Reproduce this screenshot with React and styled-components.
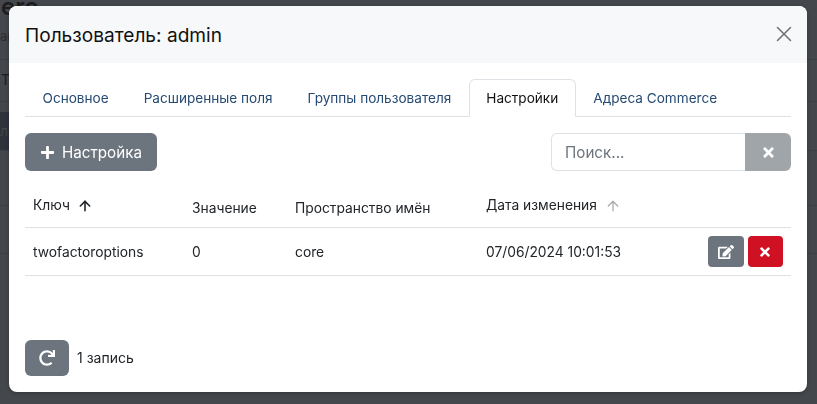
import React from "react";
import styled, { createGlobalStyle } from "styled-components";
import { FaPlus, FaTimes, FaEdit, FaRedo } from "react-icons/fa";
import { ArrowUp, X } from "lucide-react";

const GlobalStyle = createGlobalStyle`
  html, body {
    margin: 0;
    padding: 0;
    height: 100%;
    background: #44474c;
    font-family: Inter, "Liberation Sans", sans-serif;
    overflow: hidden;
  }
`;

const rows = [
  { key: "twofactoroptions", value: "0", ns: "core", date: "07/06/2024 10:01:53" },
];

const App = () => (
  <>
    <GlobalStyle />
    <Page>
      <PageTitle>
        ero <small>1.0.0</small>
      </PageTitle>
      <PageSub>ав</PageSub>
      <PageTab>Т</PageTab>
      <PageBar>ль</PageBar>
      <PageRow $height={55} />
      <PageRow $height={48} />
    </Page>
    <Modal>
      <Header>
        <Title>Пользователь: admin</Title>
        <CloseButton aria-label="Закрыть">
          <X size={26} strokeWidth={1.4} />
        </CloseButton>
      </Header>
      <Body>
        <Tabs>
          <Tab>Основное</Tab>
          <Tab>Расширенные поля</Tab>
          <Tab>Группы пользователя</Tab>
          <Tab $active>Настройки</Tab>
          <Tab>Адреса Commerce</Tab>
        </Tabs>
        <Toolbar>
          <AddButton>
            <FaPlus size={15} />
            Настройка
          </AddButton>
          <Search>
            <SearchInput placeholder="Поиск..." />
            <SearchClear>
              <FaTimes size={15} />
            </SearchClear>
          </Search>
        </Toolbar>
        <Table>
          <colgroup>
            <col width="159" />
            <col width="103" />
            <col width="191" />
            <col width="191" />
            <col />
          </colgroup>
          <thead>
            <tr>
              <Th $sorted>
                Ключ
                <SortIcon>
                  <ArrowUp size={16} strokeWidth={2.4} />
                </SortIcon>
              </Th>
              <Th>Значение</Th>
              <Th>Пространство имён</Th>
              <Th $sorted>
                Дата изменения
                <SortIcon $muted>
                  <ArrowUp size={16} strokeWidth={2} />
                </SortIcon>
              </Th>
              <Th />
            </tr>
          </thead>
          <tbody>
            {rows.map((row) => (
              <tr key={row.key}>
                <Td>{row.key}</Td>
                <Td>{row.value}</Td>
                <Td>{row.ns}</Td>
                <Td>{row.date}</Td>
                <Td>
                  <Actions>
                    <ActionButton $color="#6c757d">
                      <FaEdit size={16} />
                    </ActionButton>
                    <ActionButton $color="#d01124">
                      <FaTimes size={14} />
                    </ActionButton>
                  </Actions>
                </Td>
              </tr>
            ))}
          </tbody>
        </Table>
        <Footer>
          <RefreshButton>
            <FaRedo size={16} />
          </RefreshButton>
          <Count>1 запись</Count>
        </Footer>
      </Body>
    </Modal>
  </>
);

const Page = styled.div`
  color: #1c1d1f;
  height: 404px;
  overflow: hidden;
`;

const PageTitle = styled.div`
  font-size: 24px;
  font-weight: 600;
  line-height: 28px;
  margin: -7px 0 0 1px;
  small {
    font-size: 12px;
    font-weight: 400;
    color: #2c2e31;
  }
`;

const PageSub = styled.div`
  font-size: 13px;
  line-height: 16px;
  margin-top: 3px;
  color: #2c2e31;
  height: 31px;
  border-bottom: 1px solid #3c3f43;
`;

const PageTab = styled.div`
  font-size: 14px;
  line-height: 20px;
  padding: 10px 0 0 1px;
  height: 42px;
  box-sizing: border-box;
  color: #1c1d1f;
  border-bottom: 1px solid #3c3f43;
`;

const PageBar = styled.div`
  height: 38px;
  margin-top: 10px;
  background: linear-gradient(90deg, #2e323a 0 9px, transparent 9px);
  line-height: 38px;
  font-size: 14px;
  color: #44474c;
  border-bottom: 1px solid #3c3f43;
`;

const PageRow = styled.div`
  height: ${(p) => p.$height - 1}px;
  border-bottom: 1px solid #3c3f43;
`;

const Modal = styled.div`
  position: fixed;
  top: 6px;
  left: 9px;
  width: 798px;
  height: 386px;
  background: #fff;
  border-radius: 8px;
  overflow: hidden;
  display: flex;
  flex-direction: column;
  box-shadow: 0 1px 4px rgba(0, 0, 0, 0.25);
`;

const Header = styled.div`
  height: 57px;
  flex: none;
  box-sizing: border-box;
  background: #f7f8fa;
  display: flex;
  align-items: center;
  justify-content: space-between;
  padding: 0 10px 0 16px;
`;

const Title = styled.h5`
  margin: 0;
  font-size: 19.1px;
  font-weight: 400;
  color: #111;
`;

const CloseButton = styled.button`
  border: 0;
  background: none;
  padding: 0;
  display: flex;
  color: #6f7377;
  margin-top: -1px;
`;

const Body = styled.div`
  flex: 1;
  display: flex;
  flex-direction: column;
  padding: 16px;
  min-height: 0;
`;

const Tabs = styled.div`
  display: flex;
  border-bottom: 1px solid #dee2e6;
  height: 38px;
  box-sizing: border-box;
`;

const Tab = styled.div`
  font-size: 13.6px;
  line-height: 20px;
  padding: 8px 16.5px;
  margin-bottom: -1px;
  height: 38px;
  box-sizing: border-box;
  color: ${(p) => (p.$active ? "#111" : "#264a73")};
  background: ${(p) => (p.$active ? "#fff" : "transparent")};
  border: 1px solid ${(p) => (p.$active ? "#dee2e6" : "transparent")};
  border-bottom-color: ${(p) => (p.$active ? "#fff" : "transparent")};
  border-radius: 6px 6px 0 0;
`;

const Toolbar = styled.div`
  display: flex;
  justify-content: space-between;
  margin-top: 16px;
`;

const AddButton = styled.button`
  height: 38px;
  width: 132px;
  box-sizing: border-box;
  border: 0;
  border-radius: 6px;
  background: #6c757d;
  color: #fff;
  font: 400 15.2px Inter, sans-serif;
  display: flex;
  align-items: center;
  justify-content: center;
  gap: 7px;
`;

const Search = styled.div`
  display: flex;
  width: 240px;
  height: 38px;
`;

const SearchInput = styled.input`
  flex: 1;
  min-width: 0;
  box-sizing: border-box;
  border: 1px solid #dee2e6;
  border-right: 0;
  border-radius: 6px 0 0 6px;
  padding: 0 13px;
  font: 400 15.2px Inter, sans-serif;
  outline: none;
  &::placeholder {
    color: #6c757d;
    opacity: 1;
  }
`;

const SearchClear = styled.button`
  width: 46px;
  border: 0;
  border-radius: 0 6px 6px 0;
  background: #a0a5aa;
  color: #fff;
  display: flex;
  align-items: center;
  justify-content: center;
`;

const Table = styled.table`
  width: 100%;
  table-layout: fixed;
  border-collapse: collapse;
  margin-top: 18px;
  font-size: 13.8px;
  color: #212529;
`;

const Th = styled.th`
  height: 38px;
  padding: 0 8px ${(p) => (p.$sorted ? "4px" : "0")};
  box-sizing: border-box;
  text-align: left;
  font-weight: 400;
  border-bottom: 1px solid #dee2e6;
  white-space: nowrap;
`;

const SortIcon = styled.span`
  display: inline-block;
  vertical-align: middle;
  margin-left: ${(p) => (p.$muted ? "8px" : "7px")};
  color: ${(p) => (p.$muted ? "#a9abad" : "#212529")};
  svg {
    display: block;
  }
`;

const Td = styled.td`
  height: 48px;
  padding: 1px 8px 0;
  box-sizing: border-box;
  border-bottom: 1px solid #dee2e6;
  white-space: nowrap;
`;

const Actions = styled.div`
  display: flex;
  justify-content: flex-end;
  gap: 4px;
`;

const ActionButton = styled.button`
  width: 35.5px;
  height: 31px;
  padding: 0;
  border: 0;
  border-radius: 4px;
  background: ${(p) => p.$color};
  color: #fff;
  display: flex;
  align-items: center;
  justify-content: center;
`;

const Footer = styled.div`
  margin-top: auto;
  display: flex;
  align-items: center;
  gap: 8px;
`;

const RefreshButton = styled.button`
  width: 44px;
  height: 36px;
  padding: 0;
  border: 0;
  border-radius: 6px;
  background: #6c757d;
  color: #fff;
  display: flex;
  align-items: center;
  justify-content: center;
`;

const Count = styled.span`
  font-size: 14px;
  color: #212529;
  padding-bottom: 2px;
`;

export default App;
